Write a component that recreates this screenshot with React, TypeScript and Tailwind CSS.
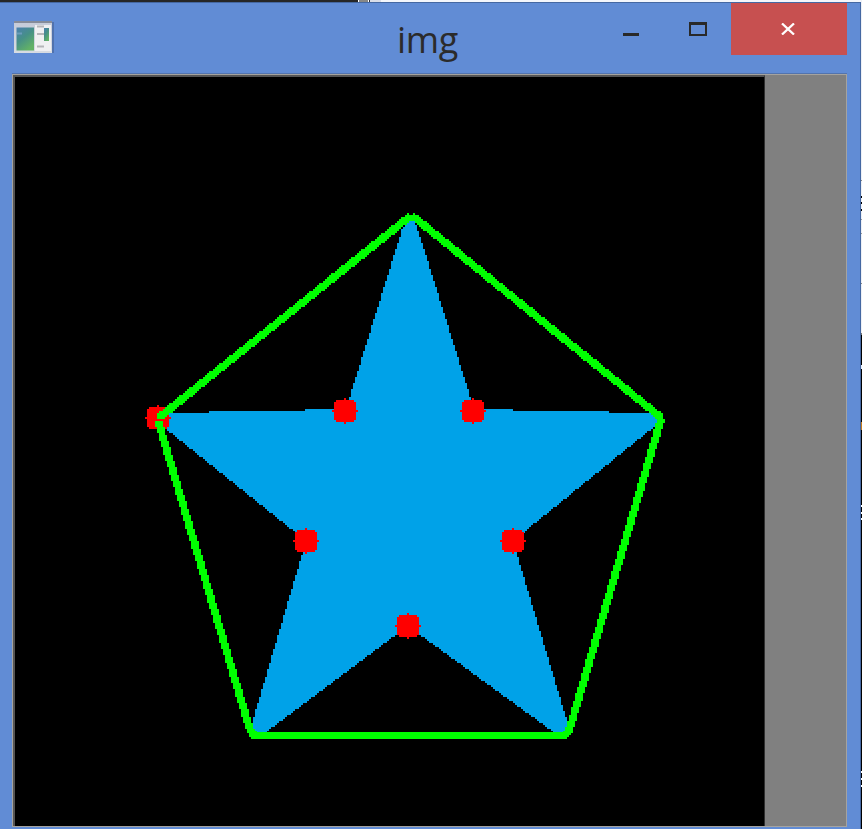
type Point = [number, number];

const edgeMarks = [
  { y: 180, h: 1, c: '#888888' },
  { y: 196, h: 2, c: '#000000' },
  { y: 202, h: 2, c: '#000000' },
  { y: 209, h: 2, c: '#000000' },
  { y: 219, h: 1, c: '#999999' },
  { y: 233, h: 1, c: '#999999' },
  { y: 283, h: 1, c: '#888888' },
  { y: 333, h: 2, c: '#777777' },
  { y: 335, h: 494, c: '#000000' },
  { y: 365, h: 4, c: '#e8eefa' },
  { y: 422, h: 8, c: '#c47a1c' },
  { y: 505, h: 2, c: '#ffffff' },
  { y: 512, h: 2, c: '#ffffff' },
  { y: 518, h: 2, c: '#ffffff' },
  { y: 771, h: 2, c: '#ffffff' },
  { y: 778, h: 2, c: '#ffffff' },
  { y: 785, h: 2, c: '#ffffff' },
];

const defects: Point[] = [
  [158, 417.5],
  [345.4, 410.5],
  [473.4, 410.5],
  [305.5, 540.5],
  [513, 540.5],
  [408, 625.5],
];

const star: Point[] = [
  [408, 220], [414, 220], [418, 230], [474, 409], [514, 409], [514, 411], [610, 411], [610, 413],
  [660, 414], [660, 422], [513, 541], [568, 724], [567, 734], [556, 734], [408, 626], [264, 734],
  [251, 734], [253, 720], [306, 541], [167, 430], [158, 414], [210, 414], [210, 411], [305, 411],
  [305, 409], [346, 409], [402, 230],
];

const hull: [Point, Point][] = [
  [[161, 416], [408.5, 217.5]],
  [[414.5, 217.5], [659, 416]],
  [[659, 416], [660.5, 421]],
  [[660.5, 421], [569, 731]],
  [[569, 731], [565, 735.5]],
  [[254, 735.5], [250, 730]],
  [[250, 730], [159, 424]],
];

const CELL = 2;
const LEFT = 15;
const TOP = 77;

/** Scans the enlarged pixel grid and returns one path made of horizontal runs. */
function raster(inside: (x: number, y: number) => boolean) {
  let d = '';
  for (let y = TOP + 132; y < 745; y += CELL) {
    let start = -1;
    for (let x = LEFT + 130; x < 675; x += CELL) {
      const hit = inside(x + CELL / 2, y + CELL / 2);
      if (hit && start < 0) start = x;
      if (!hit && start >= 0) {
        d += `M${start} ${y}H${x}v${CELL}H${start}z`;
        start = -1;
      }
    }
  }
  return d;
}

function inStar(x: number, y: number) {
  let odd = false;
  star.forEach(([ax, ay], i) => {
    const [bx, by] = star[(i + 1) % star.length];
    if (ay > y !== by > y && x < ((bx - ax) * (y - ay)) / (by - ay) + ax) odd = !odd;
  });
  return odd;
}

function onHull(x: number, y: number) {
  return hull.some(([[ax, ay], [bx, by]]) => {
    const dx = bx - ax;
    const dy = by - ay;
    const t = Math.max(0, Math.min(1, ((x - ax) * dx + (y - ay) * dy) / (dx * dx + dy * dy)));
    return Math.hypot(x - ax - t * dx, y - ay - t * dy) <= 3.8;
  });
}

const starPath = raster(inStar);
const hullPath = raster(onHull);

const dotRows = [0, 4, 5, 5, 5, 5, 6, 5, 5, 5, 5, 4, 0];

function Dot({ x, y }: { x: number; y: number }) {
  const left = Math.round(x);
  const top = Math.round(y) - 13;
  return (
    <path
      d={dotRows.map((r, i) => `M${left - 2 * r - 1} ${top + 2 * i}h${4 * r + 2}v2h-${4 * r + 2}z`).join('')}
      fill="#ff0000"
    />
  );
}

function AppIcon() {
  return (
    <svg width="40" height="33" viewBox="14 21 40 33">
      <defs>
        <linearGradient id="pane" x1="0" y1="0" x2="0.6" y2="1">
          <stop offset="0" stopColor="#4b7fb0" />
          <stop offset="0.5" stopColor="#469087" />
          <stop offset="1" stopColor="#62b266" />
        </linearGradient>
        <linearGradient id="frame" x1="0" y1="0" x2="0" y2="1">
          <stop offset="0" stopColor="#c4cad8" />
          <stop offset="1" stopColor="#d8dce2" />
        </linearGradient>
      </defs>
      <rect x="15" y="22" width="39" height="31" fill="#5072ae" />
      <rect x="14" y="21" width="38" height="32" fill="url(#frame)" />
      <rect x="14" y="21" width="38" height="2" fill="#858b99" />
      <rect x="35" y="25" width="16" height="26" fill="#f0f0f2" />
      <rect x="16.5" y="27.5" width="17.5" height="23" fill="url(#pane)" />
      <rect x="17" y="32.5" width="5" height="2" fill="#6b9cba" />
      <rect x="44" y="28" width="5" height="13" fill="url(#pane)" />
      <path d="M37 26.5h7M37 34h7M37 46.5h7" stroke="#b5b5b9" strokeWidth="2" />
    </svg>
  );
}

function ImageView() {
  return (
    <svg className="block bg-black" width="749" height="749" viewBox="15 77 749 749" shapeRendering="crispEdges">
      <path d={starPath} fill="#00a2e8" />
      {defects.map(([x, y]) => (
        <Dot key={`${x}-${y}`} x={x} y={y} />
      ))}
      <path d={hullPath} fill="#00ff00" />
      <rect x="253" y="732" width="314" height="7" fill="#00ff00" />
    </svg>
  );
}

export default function App() {
  return (
    <div className="flex h-[829px] w-[862px] overflow-hidden">
      <div className="flex w-[861px] flex-col">
        <div className="flex h-[2px] bg-[#f4f6fb]">
          <div className="w-[358px] bg-[#262626]" />
          <div className="w-px bg-white" />
          <div className="w-[9px] bg-[#888887]" />
          <div className="w-px bg-white" />
          <div className="w-px bg-[#333333]" />
          <div className="w-[11px] bg-[#d9dde8]" />
        </div>
        <div className="flex h-[827px] flex-col border-t border-r border-[#4568a2] bg-[#618cd5]">
          <header className="flex h-[70px] shrink-0 items-start pl-[14px]">
            <div className="mt-[18px] w-[40px]">
              <AppIcon />
            </div>
            <h1 className="w-[548px] pl-[343px] pt-[12px] font-['Open_Sans','Noto_Sans',sans-serif] text-[36px] leading-[50px] font-normal tracking-[-0.3px] text-[#2b2b2b]">
              img
            </h1>
            <button aria-label="Minimize" className="flex h-[52px] w-[58px] items-start pl-[21px] pt-[30px]">
              <span className="h-[3px] w-[16px] bg-[#292929]" />
            </button>
            <button aria-label="Maximize" className="flex h-[52px] w-[71px] items-start pl-[29px] pt-[19px]">
              <span className="h-[14px] w-[18px] border-2 border-t-[3px] border-[#292929]" />
            </button>
            <button aria-label="Close" className="flex h-[52px] w-[116px] items-start bg-[#c75050] pl-[50px] pt-[20px]">
              <svg width="14" height="12" viewBox="0 0 14 12">
                <path d="M1 .5l12 11M13 .5l-12 11" stroke="#ffffff" strokeWidth="2.3" />
              </svg>
            </button>
          </header>
          <div className="ml-[12px] h-px w-[835px] shrink-0 self-start bg-[#5273ad]" />
          <main className="ml-[12px] flex h-[753px] w-[835px] shrink-0 border border-[#a5a39f] bg-[#808080]">
            <div className="h-[751px] w-[752px] border-t-2 border-r border-l-2 border-[#555555] border-r-[#303030]">
              <ImageView />
            </div>
          </main>
        </div>
      </div>
      <svg width="1" height="829" shapeRendering="crispEdges">
        <rect width="1" height="829" fill="#edf0f6" />
        {edgeMarks.map((m) => (
          <rect key={m.y} y={m.y} width="1" height={m.h} fill={m.c} />
        ))}
      </svg>
    </div>
  );
}
